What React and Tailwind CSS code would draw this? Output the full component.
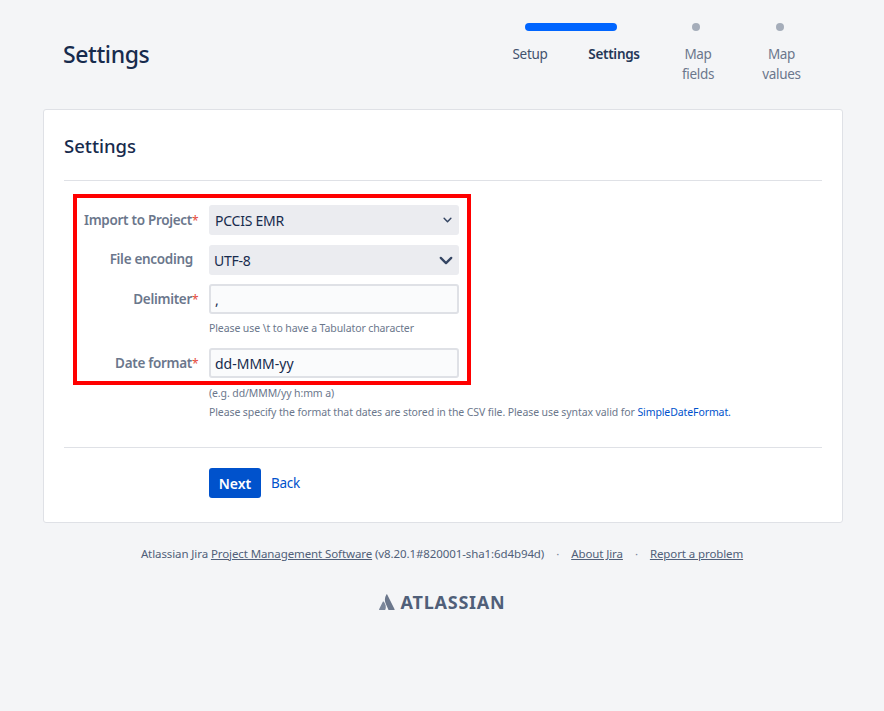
import React from "react";

const font = { fontFamily: '"Noto Sans", "Open Sans", sans-serif' };

function Chevron({ className }) {
  return (
    <svg viewBox="0 0 16 10" className={className} fill="none" stroke="#344563" strokeWidth="2.6" strokeLinecap="round" strokeLinejoin="round">
      <path d="M2 2l6 6 6-6" />
    </svg>
  );
}

function Label({ children, required }) {
  return (
    <label className={`w-[135px] shrink-0 text-right text-[13.5px] leading-[20px] font-semibold text-[#6b778c] tracking-[-0.3px] whitespace-nowrap ${required ? "" : "mb-[3px]"}`}>
      {children}
      {required ? <span className="inline-block w-[7px] text-left text-[12px] text-[#e5493a] font-normal">*</span> : <span className="inline-block w-[6px]" />}
    </label>
  );
}

function SelectBox({ value, small }) {
  return (
    <div className={`w-[250px] h-[30px] ml-[10px] rounded-[3px] bg-[#ebecf0] flex items-center justify-between pr-[6px] text-[14px] text-[#172b4d] tracking-[-0.25px] ${small ? "pl-[6px]" : "pl-[5px]"}`}>
      <span>{value}</span>
      {small ? <Chevron className="w-[9px] h-[6px] mr-[1px]" /> : <Chevron className="w-[14px] h-[9px]" />}
    </div>
  );
}

function TextBox({ value }) {
  return (
    <div className="w-[250px] h-[30px] ml-[10px] rounded-[3px] bg-[#fafbfc] border-2 border-[#dfe1e6] flex items-center pl-[4px] text-[14px] text-[#172b4d]">
      {value}
    </div>
  );
}

function Help({ children, className = "" }) {
  return <div className={`ml-[145px] text-[10.5px] leading-[14px] text-[#6b778c] tracking-[-0.1px] whitespace-nowrap ${className}`}>{children}</div>;
}

export default function App() {
  return (
    <div style={font} className="min-h-[711px] bg-[#f4f5f7] overflow-hidden">
      <header className="h-[109px] pl-[63px] flex items-start">
        <h1 className="mt-[37px] text-[23px] leading-[34px] font-medium text-[#172b4d] tracking-[-0.4px]">Settings</h1>
        <div className="ml-auto mr-[84px] w-[300px] text-[13.5px] tracking-[-0.3px] text-center">
          <div className="mt-[23px] h-[8px] flex items-center">
            <div className="ml-[25px] w-[92px] h-[8px] rounded-full bg-[#0065ff]" />
            <div className="ml-[75px] w-[8px] h-[8px] rounded-full bg-[#a5adba]" />
            <div className="ml-[76px] w-[8px] h-[8px] rounded-full bg-[#a5adba]" />
          </div>
          <div className="mt-[13px] flex leading-[20px] text-[#6b778c]">
            <div className="w-[84px] shrink-0 ml-[-12px] text-[#42526e]">Setup</div>
            <div className="w-[84px] shrink-0 font-semibold text-[#253858]">Settings</div>
            <div className="w-[84px] shrink-0">Map<br />fields</div>
            <div className="w-[83px] shrink-0">Map<br />values</div>
          </div>
        </div>
      </header>

      <main className="relative w-[800px] h-[414px] ml-[43px] bg-white border border-[#dfe1e6] rounded-[3px] px-[20px]">
        <h2 className="mt-[21px] text-[18.5px] leading-[30px] font-medium text-[#172b4d]">Settings</h2>
        <div className="mt-[19px] border-t border-[#dfe1e6]" />

        <div className="mt-[24px] flex items-center">
          <Label required>Import to Project</Label>
          <SelectBox value="PCCIS EMR" small />
        </div>
        <div className="mt-[10px] flex items-center">
          <Label>File encoding</Label>
          <SelectBox value="UTF-8" />
        </div>
        <div className="mt-[9px] flex items-center">
          <Label required>Delimiter</Label>
          <TextBox value="," />
        </div>
        <Help className="mt-[7px]">Please use \t to have a Tabulator character</Help>
        <div className="mt-[13px] flex items-center">
          <Label required>Date format</Label>
          <TextBox value="dd-MMM-yy" />
        </div>
        <Help className="mt-[8px]">(e.g. dd/MMM/yy h:mm a)</Help>
        <Help className="mt-[5px]">
          Please specify the format that dates are stored in the CSV file. Please use syntax valid for{" "}
          <a className="text-[#0052cc]">SimpleDateFormat.</a>
        </Help>

        <div className="mt-[28px] border-t border-[#dfe1e6]" />
        <div className="mt-[20px] ml-[145px] flex items-center">
          <button className="w-[52px] h-[30px] rounded-[3px] bg-[#0052cc] text-white text-[14px] font-semibold">Next</button>
          <a className="ml-[10px] text-[13.5px] text-[#0052cc] tracking-[-0.25px]">Back</a>
        </div>

        {/* red annotation drawn over the form */}
        <div className="absolute left-[29px] top-[84px] w-[398px] h-[191px] border-4 border-[#ff0000] pointer-events-none" />
      </main>

      <footer className="mt-[21px] flex flex-col items-center">
        <div className="h-[20px] text-[11.5px] leading-[20px] text-[#505f79] tracking-[-0.1px] whitespace-nowrap">
          Atlassian Jira <span className="underline">Project Management Software</span> (v8.20.1#820001-sha1:6d4b94d)
          <span className="mx-[12px] text-[#7a869a]">·</span>
          <span className="underline">About Jira</span>
          <span className="mx-[12px] text-[#7a869a]">·</span>
          <span className="underline">Report a problem</span>
        </div>
        <div className="mt-[28px] flex items-center">
          <svg viewBox="0 0 16 16" className="w-[16px] h-[16px]">
            <path d="M4.6 7.6c-.2-.3-.6-.2-.8.1L.1 15.2c-.2.4.1.8.5.8h5.2c.2 0 .4-.1.5-.3 1.1-2.3.4-5.9-1.7-8.1z" fill="#7a869a" />
            <path d="M7.4 .6c-2 3.2-1.9 6.700-.5 9.400l2.500 5.700c.1.200.3.300.5.300h5.200c.4 0 .7-.4.500-.8L8.200 .6c-.2-.4-.6-.4-.8 0z" fill="#6b778c" />
          </svg>
          <span className="ml-[6px] text-[18px] leading-[20px] font-bold text-[#505f79] tracking-[0.75px]">ATLASSIAN</span>
        </div>
      </footer>
    </div>
  );
}
